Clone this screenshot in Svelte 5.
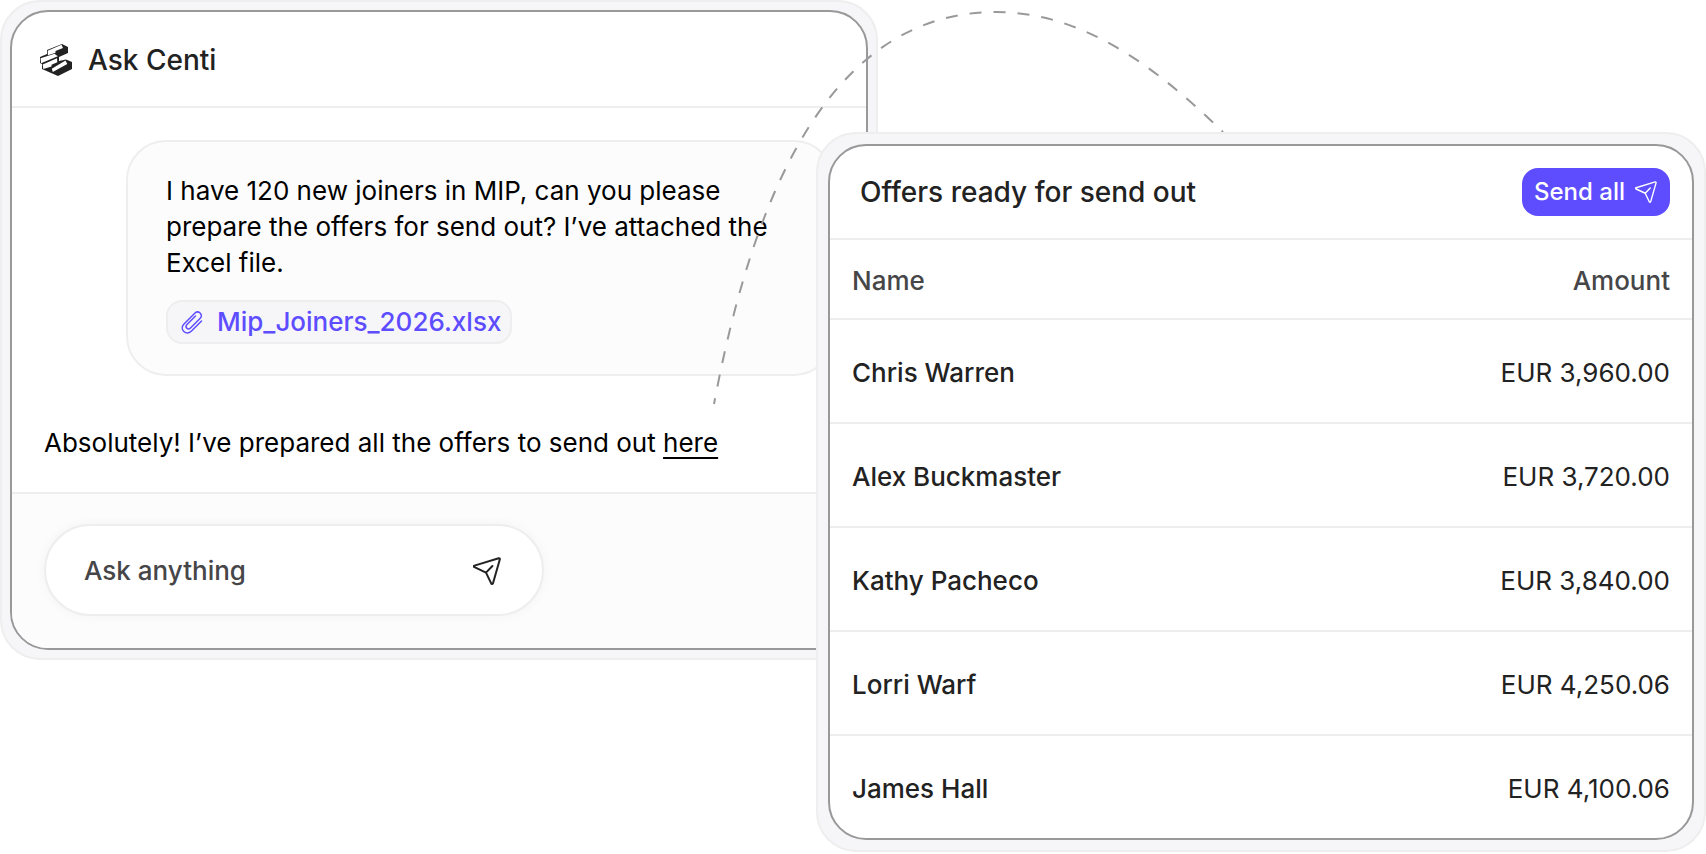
<script>
  const offers = [
    { name: 'Chris Warren', amount: 'EUR 3,960.00' },
    { name: 'Alex Buckmaster', amount: 'EUR 3,720.00' },
    { name: 'Kathy Pacheco', amount: 'EUR 3,840.00' },
    { name: 'Lorri Warf', amount: 'EUR 4,250.06' },
    { name: 'James Hall', amount: 'EUR 4,100.06' }
  ];
</script>

{#snippet plane(size, width)}
  <svg width={size} height={size} viewBox="0 0 28 28" fill="none" stroke="currentColor" stroke-width={width} stroke-linecap="round" stroke-linejoin="round" aria-hidden="true">
    <path d="M1.4 8.600 25.700 1.200c.8-.2 1.300.4 1.100 1.200L20 26.200c-.3 1-1.300 1.100-1.800.2L13 15.600 1.500 10.200c-.9-.4-.9-1.300-.1-1.600ZM13 15.600 19.400 9" />
  </svg>
{/snippet}

<main class="scene">
  <section class="frame chat-frame">
    <div class="card chat">
      <header class="chat-head">
        <svg class="logo" width="32" height="32" viewBox="0 0 32 32" aria-hidden="true">
          <path class="dark" d="M22 0 28 3V9L19 13V17L26 15.500 32 18V25L18 32 2 25V20L0 19V13L7 10V6Z" />
          <path class="light" d="M7.700 6.700 21.500 .8 23 4 15.500 7 15.500 8.800 7.900 11.300ZM.6 14.200 14.500 9.700 17.800 12.300 1 19.300ZM2.700 20.600 17 14.300 17.300 18.200 11.500 20.800 11.500 22.500 3.300 25ZM11.800 24.800 25.500 16.500 27.300 20 12.800 28Z" />
        </svg>
        <h1>Ask Centi</h1>
      </header>
      <div class="messages">
        <div class="bubble">
          <p>I have 120 new joiners in MIP, can you please prepare the offers for send out? I’ve attached the Excel file.</p>
          <a class="file" href="#file">
            <svg width="22" height="24" viewBox="0 0 22 24" fill="none" stroke="currentColor" stroke-width="1.500" stroke-linecap="round" stroke-linejoin="round" aria-hidden="true">
              <path d="M20.500 11 10.500 21C5 26-2 19.500 3 14L13.500 3.500C17-.5 23 4.500 19 8.500L9.500 18C7 20.500 3.500 17.500 6 14.500L14.500 6" />
            </svg>
            Mip_Joiners_2026.xlsx
          </a>
        </div>
        <p>Absolutely! I’ve prepared all the offers to send out <a class="here" href="#offers">here</a></p>
      </div>
      <form class="composer">
        <div class="ask">
          <input type="text" placeholder="Ask anything" aria-label="Ask anything" />
          <button type="button" aria-label="Send">{@render plane(28, 2)}</button>
        </div>
      </form>
    </div>
  </section>

  <svg class="arc" viewBox="0 0 1706 854" fill="none" aria-hidden="true">
    <path d="M714 404C745 240 811 12 996 12C1088 12 1163 74 1223 132" stroke="#999" stroke-width="2" stroke-dasharray="12 12" stroke-dashoffset="6" />
  </svg>

  <section class="frame offers-frame" id="offers">
    <div class="card">
      <header class="offers-head">
        <h2>Offers ready for send out</h2>
        <button type="button" class="send-all">Send all {@render plane(22, 1.8)}</button>
      </header>
      <table>
        <thead>
          <tr><th scope="col">Name</th><th scope="col">Amount</th></tr>
        </thead>
        <tbody>
          {#each offers as offer}
            <tr><td>{offer.name}</td><td>{offer.amount}</td></tr>
          {/each}
        </tbody>
      </table>
    </div>
  </section>
</main>

<style>
  :global(body) {
    margin: 0;
    background: #fff;
  }
  .scene {
    position: relative;
    display: grid;
    grid-template-columns: 816fr 62fr 828fr;
    align-items: start;
    font: 400 26px/36px Inter, sans-serif;
    color: #222;
  }
  .scene * {
    box-sizing: border-box;
  }
  h1,
  h2,
  p {
    margin: 0;
  }
  h1,
  h2 {
    font-size: 28px;
    font-weight: 500;
  }
  button,
  input {
    font: inherit;
    border: 0;
    padding: 0;
    background: none;
  }
  svg {
    display: block;
    flex: none;
  }
  .frame {
    grid-row: 1;
    min-width: 0;
    border: 2px solid #eee;
    border-radius: 40px;
    background: #f6f6f9;
  }
  .chat-frame {
    grid-column: 1 / 3;
    padding: 8px;
  }
  .offers-frame {
    grid-column: 2 / 4;
    position: relative;
    margin-top: 132px;
    padding: 10px;
  }
  .card {
    overflow: hidden;
    border: 2px solid #999;
    border-radius: 38px;
    background: #fff;
  }
  .arc {
    position: absolute;
    top: 0;
    left: 0;
    width: 100%;
    pointer-events: none;
  }

  .chat-head {
    display: flex;
    align-items: center;
    gap: 16px;
    height: 96px;
    padding: 2px 28px 0;
    border-bottom: 2px solid #eee;
  }
  .dark {
    fill: #222;
  }
  .light {
    fill: #fff;
  }
  .messages {
    padding: 32px 32px 31px;
    color: #000;
  }
  .bubble {
    margin: 0 0 48px 82px;
    padding: 31px 38px 30px;
    border: 2px solid #eee;
    border-radius: 40px;
    background: #fcfcfc;
  }
  .file {
    display: flex;
    align-items: center;
    gap: 14px;
    width: fit-content;
    height: 44px;
    margin-top: 19px;
    padding: 0 9px 0 13px;
    border: 2px solid #eee;
    border-radius: 16px;
    background: #f6f6f9;
    color: #5d4dff;
    font-weight: 500;
    text-decoration: none;
  }
  .messages > p {
    padding-top: 1px;
  }
  .here {
    color: inherit;
    text-decoration: underline 2px;
    text-underline-offset: 5px;
  }
  .composer {
    padding: 30px 32px 32px;
    border-top: 2px solid #eee;
    background: #fcfcfc;
  }
  .ask {
    display: flex;
    align-items: center;
    width: 500px;
    max-width: 100%;
    height: 92px;
    padding: 2px 41px 0 38px;
    border: 2px solid #eee;
    border-radius: 46px;
    background: #fff;
    box-shadow: 0 0 12px rgb(0 0 60 / 4%);
  }
  .ask input {
    flex: 1;
    min-width: 0;
    font-weight: 500;
    outline: none;
  }
  .ask input::placeholder {
    color: #464648;
    opacity: 1;
  }
  .ask button {
    color: #222;
  }

  .offers-head {
    display: flex;
    align-items: center;
    justify-content: space-between;
    height: 94px;
    padding: 0 22px 0 30px;
    border-bottom: 2px solid #eee;
  }
  .send-all {
    display: flex;
    align-items: center;
    gap: 10px;
    height: 48px;
    padding: 0 13px 0 12px;
    border-radius: 16px;
    background: #5d4dff;
    color: #fff;
    font-size: 24px;
    font-weight: 500;
  }
  table {
    width: 100%;
    border-collapse: separate;
    border-spacing: 0;
  }
  th,
  td {
    height: 104px;
    padding: 4px 22px 0;
    border-bottom: 2px solid #eee;
    text-align: left;
  }
  th {
    height: 80px;
    color: #464648;
    font-weight: 500;
  }
  td:first-child {
    font-weight: 500;
  }
  th:last-child,
  td:last-child {
    text-align: right;
  }
  tbody tr:last-child td {
    height: 102px;
    border-bottom: 0;
  }
</style>
